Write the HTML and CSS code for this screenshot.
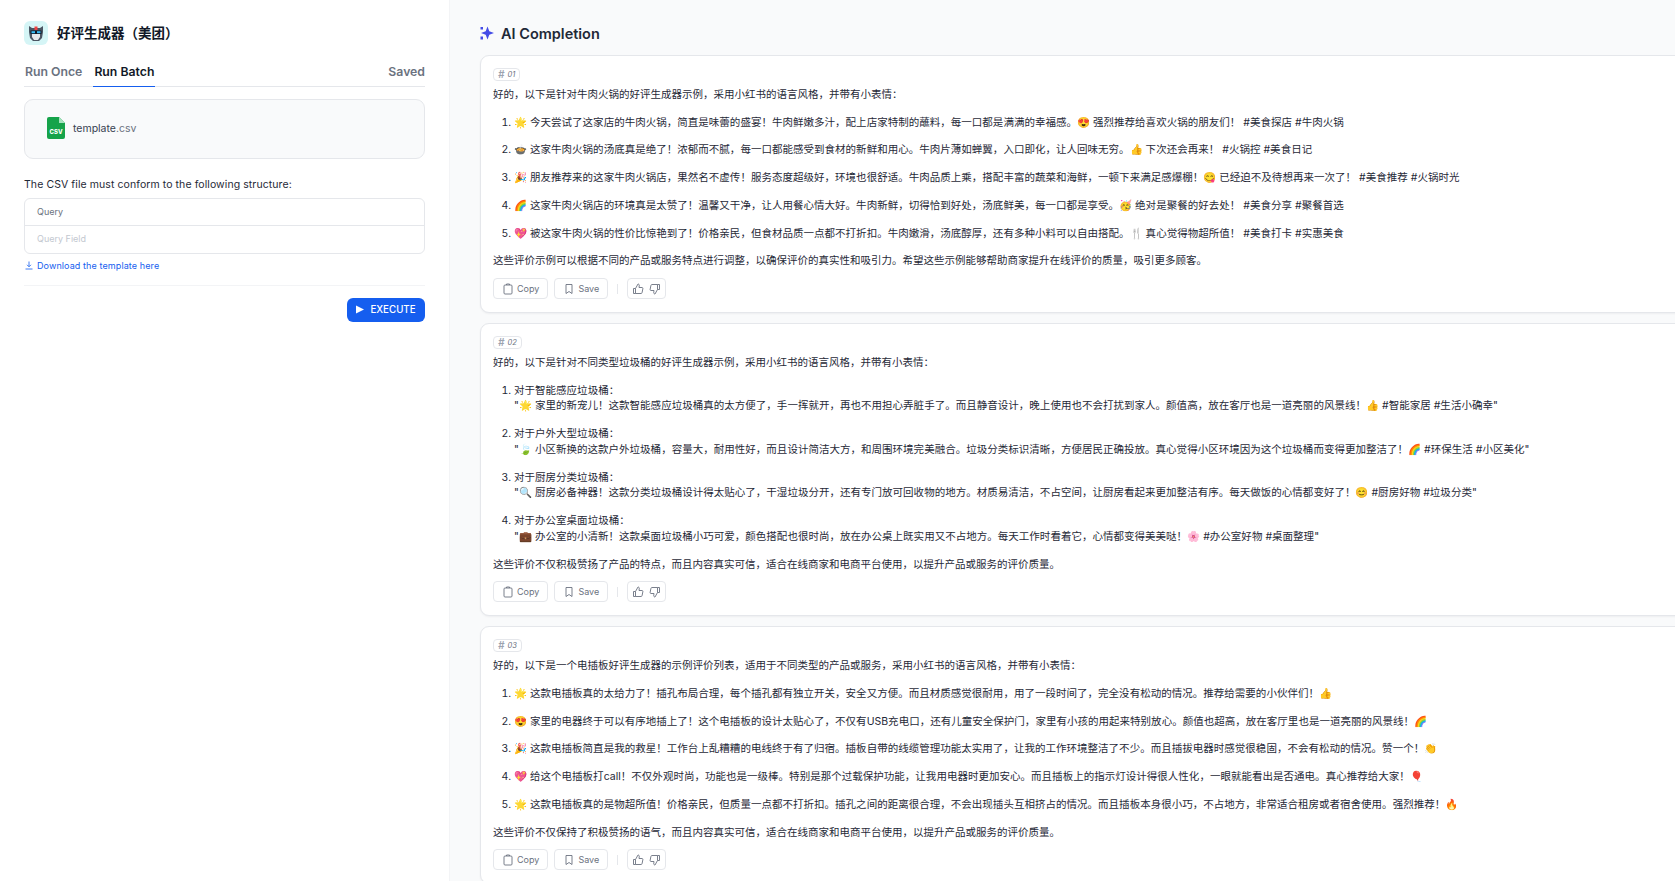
FILE: index.html
```html
<!DOCTYPE html>
<html lang="zh-CN">
<head>
    <meta charset="UTF-8">
    <title>好评生成器（美团）</title>
    <link rel="stylesheet" href="styles.css">
</head>
<body>

<aside class="sidebar">
    <div class="app-head">
        <div class="app-logo">
            <svg width="18" height="18" viewBox="0 0 18 18">
                <path d="M2 2l3 2h8l3-2v6l-1 6-3 3H6l-3-3-1-6z" fill="#4b5563"/>
                <path d="M5 10h8v3l-2 3H7l-2-3z" fill="#e5e7eb"/>
                <rect x="3.500" y="6.500" width="11" height="3.500" fill="#111827"/>
                <rect x="4.500" y="7.200" width="3.500" height="2" fill="#38bdf8"/>
                <rect x="10" y="7.200" width="3.500" height="2" fill="#38bdf8"/>
                <rect x="7.500" y="2.500" width="3" height="3.500" fill="#ef4444"/>
            </svg>
        </div>
        <div class="app-title">好评生成器（美团）</div>
    </div>

    <div class="tabs">
        <div class="tab">Run Once</div>
        <div class="tab tab-active">Run Batch</div>
        <div class="tab tab-saved">Saved</div>
    </div>

    <div class="upload-box">
        <svg class="csv-icon" width="18" height="22" viewBox="0 0 18 22">
            <path d="M2 0h10l6 6v14a2 2 0 0 1-2 2H2a2 2 0 0 1-2-2V2a2 2 0 0 1 2-2z" fill="#16a34a"/>
            <path d="M12 0l6 6h-6z" fill="#a7e3bf"/>
            <text x="9" y="17" text-anchor="middle" class="csv-label">CSV</text>
        </svg>
        <span class="file-name">template<span class="file-ext">.csv</span></span>
    </div>

    <p class="csv-hint">The CSV file must conform to the following structure:</p>

    <div class="csv-table">
        <div class="csv-row">Query</div>
        <div class="csv-row csv-row-light">Query Field</div>
    </div>

    <a class="download-link" href="#">
        <svg width="8" height="9" viewBox="0 0 8 9" fill="none" stroke="#155eef" stroke-width="0.800">
            <path d="M4 0.500v5M2 3.800l2 2 2-2M0.500 8h7"/>
        </svg>
        Download the template here
    </a>

    <div class="sidebar-divider"></div>

    <div class="execute-row">
        <button class="execute-btn">
            <svg width="8" height="9" viewBox="0 0 8 9"><path d="M0 0.500l8 4-8 4z" fill="#fff"/></svg>
            EXECUTE
        </button>
    </div>
</aside>

<main class="main">
    <div class="main-head">
        <svg width="14" height="14" viewBox="0 0 14 14" fill="#444ce7">
            <path d="M7.500 0.500l1.800 4.700L14 7 9.300 8.800 7.500 13.500 5.700 8.800 1 7l4.700-1.800z"/>
            <rect x="0.500" y="1" width="2.500" height="2.500"/>
            <rect x="0.500" y="10.500" width="2.500" height="3"/>
        </svg>
        <h2>AI Completion</h2>
    </div>

    <section class="card">
        <div class="badge"><span class="badge-hash">#</span> 01</div>
        <p>好的，以下是针对牛肉火锅的好评生成器示例，采用小红书的语言风格，并带有小表情：</p>
        <ol>
            <li>🌟 今天尝试了这家店的牛肉火锅，简直是味蕾的盛宴！牛肉鲜嫩多汁，配上店家特制的蘸料，每一口都是满满的幸福感。😍 强烈推荐给喜欢火锅的朋友们！ #美食探店 #牛肉火锅</li>
            <li>🍲 这家牛肉火锅的汤底真是绝了！浓郁而不腻，每一口都能感受到食材的新鲜和用心。牛肉片薄如蝉翼，入口即化，让人回味无穷。👍 下次还会再来！ #火锅控 #美食日记</li>
            <li>🎉 朋友推荐来的这家牛肉火锅店，果然名不虚传！服务态度超级好，环境也很舒适。牛肉品质上乘，搭配丰富的蔬菜和海鲜，一顿下来满足感爆棚！😋 已经迫不及待想再来一次了！ #美食推荐 #火锅时光</li>
            <li>🌈 这家牛肉火锅店的环境真是太赞了！温馨又干净，让人用餐心情大好。牛肉新鲜，切得恰到好处，汤底鲜美，每一口都是享受。🥳 绝对是聚餐的好去处！ #美食分享 #聚餐首选</li>
            <li>💖 被这家牛肉火锅的性价比惊艳到了！价格亲民，但食材品质一点都不打折扣。牛肉嫩滑，汤底醇厚，还有多种小料可以自由搭配。🍴 真心觉得物超所值！ #美食打卡 #实惠美食</li>
        </ol>
        <p>这些评价示例可以根据不同的产品或服务特点进行调整，以确保评价的真实性和吸引力。希望这些示例能够帮助商家提升在线评价的质量，吸引更多顾客。</p>
        <div class="actions">
            <button class="action-btn"><svg class="icon" viewBox="0 0 12 12"><rect x="2" y="2" width="8" height="9" rx="1"/><path d="M4.500 2V1h3v1"/></svg>Copy</button>
            <button class="action-btn"><svg class="icon" viewBox="0 0 12 12"><path d="M3 1.500h6v9L6 8.500l-3 2z"/></svg>Save</button>
            <span class="action-sep"></span>
            <div class="vote-group">
                <svg class="icon vote" viewBox="0 0 12 12"><path d="M1.500 5.500h2v5h-2zM3.500 5.500L6 1c1 0 1.500.8 1.200 2L7 4.500h3c.6 0 1 .5.900 1l-.8 4c-.1.600-.5 1-1 1H3.500"/></svg>
                <svg class="icon vote" viewBox="0 0 12 12"><path d="M10.500 6.500h-2v-5h2zM8.500 6.500L6 11c-1 0-1.500-.8-1.200-2L5 7.500H2c-.6 0-1-.5-.9-1l.8-4c.1-.6.500-1 1-1h5.600"/></svg>
            </div>
        </div>
    </section>

    <section class="card">
        <div class="badge"><span class="badge-hash">#</span> 02</div>
        <p>好的，以下是针对不同类型垃圾桶的好评生成器示例，采用小红书的语言风格，并带有小表情：</p>
        <ol>
            <li>对于智能感应垃圾桶：<br>"🌟 家里的新宠儿！这款智能感应垃圾桶真的太方便了，手一挥就开，再也不用担心弄脏手了。而且静音设计，晚上使用也不会打扰到家人。颜值高，放在客厅也是一道亮丽的风景线！👍 #智能家居 #生活小确幸"</li>
            <li>对于户外大型垃圾桶：<br>"🍃 小区新换的这款户外垃圾桶，容量大，耐用性好，而且设计简洁大方，和周围环境完美融合。垃圾分类标识清晰，方便居民正确投放。真心觉得小区环境因为这个垃圾桶而变得更加整洁了！🌈 #环保生活 #小区美化"</li>
            <li>对于厨房分类垃圾桶：<br>"🔍 厨房必备神器！这款分类垃圾桶设计得太贴心了，干湿垃圾分开，还有专门放可回收物的地方。材质易清洁，不占空间，让厨房看起来更加整洁有序。每天做饭的心情都变好了！😊 #厨房好物 #垃圾分类"</li>
            <li>对于办公室桌面垃圾桶：<br>"💼 办公室的小清新！这款桌面垃圾桶小巧可爱，颜色搭配也很时尚，放在办公桌上既实用又不占地方。每天工作时看着它，心情都变得美美哒！🌸 #办公室好物 #桌面整理"</li>
        </ol>
        <p>这些评价不仅积极赞扬了产品的特点，而且内容真实可信，适合在线商家和电商平台使用，以提升产品或服务的评价质量。</p>
        <div class="actions">
            <button class="action-btn"><svg class="icon" viewBox="0 0 12 12"><rect x="2" y="2" width="8" height="9" rx="1"/><path d="M4.500 2V1h3v1"/></svg>Copy</button>
            <button class="action-btn"><svg class="icon" viewBox="0 0 12 12"><path d="M3 1.500h6v9L6 8.500l-3 2z"/></svg>Save</button>
            <span class="action-sep"></span>
            <div class="vote-group">
                <svg class="icon vote" viewBox="0 0 12 12"><path d="M1.500 5.500h2v5h-2zM3.500 5.500L6 1c1 0 1.500.8 1.200 2L7 4.500h3c.6 0 1 .5.900 1l-.8 4c-.1.600-.5 1-1 1H3.500"/></svg>
                <svg class="icon vote" viewBox="0 0 12 12"><path d="M10.500 6.500h-2v-5h2zM8.500 6.500L6 11c-1 0-1.500-.8-1.200-2L5 7.500H2c-.6 0-1-.5-.9-1l.8-4c.1-.6.500-1 1-1h5.600"/></svg>
            </div>
        </div>
    </section>

    <section class="card">
        <div class="badge"><span class="badge-hash">#</span> 03</div>
        <p>好的，以下是一个电插板好评生成器的示例评价列表，适用于不同类型的产品或服务，采用小红书的语言风格，并带有小表情：</p>
        <ol>
            <li>🌟 这款电插板真的太给力了！插孔布局合理，每个插孔都有独立开关，安全又方便。而且材质感觉很耐用，用了一段时间了，完全没有松动的情况。推荐给需要的小伙伴们！👍</li>
            <li>😍 家里的电器终于可以有序地插上了！这个电插板的设计太贴心了，不仅有USB充电口，还有儿童安全保护门，家里有小孩的用起来特别放心。颜值也超高，放在客厅里也是一道亮丽的风景线！🌈</li>
            <li>🎉 这款电插板简直是我的救星！工作台上乱糟糟的电线终于有了归宿。插板自带的线缆管理功能太实用了，让我的工作环境整洁了不少。而且插拔电器时感觉很稳固，不会有松动的情况。赞一个！👏</li>
            <li>💖 给这个电插板打call！不仅外观时尚，功能也是一级棒。特别是那个过载保护功能，让我用电器时更加安心。而且插板上的指示灯设计得很人性化，一眼就能看出是否通电。真心推荐给大家！🎈</li>
            <li>🌟 这款电插板真的是物超所值！价格亲民，但质量一点都不打折扣。插孔之间的距离很合理，不会出现插头互相挤占的情况。而且插板本身很小巧，不占地方，非常适合租房或者宿舍使用。强烈推荐！🔥</li>
        </ol>
        <p>这些评价不仅保持了积极赞扬的语气，而且内容真实可信，适合在线商家和电商平台使用，以提升产品或服务的评价质量。</p>
        <div class="actions">
            <button class="action-btn"><svg class="icon" viewBox="0 0 12 12"><rect x="2" y="2" width="8" height="9" rx="1"/><path d="M4.500 2V1h3v1"/></svg>Copy</button>
            <button class="action-btn"><svg class="icon" viewBox="0 0 12 12"><path d="M3 1.500h6v9L6 8.500l-3 2z"/></svg>Save</button>
            <span class="action-sep"></span>
            <div class="vote-group">
                <svg class="icon vote" viewBox="0 0 12 12"><path d="M1.500 5.500h2v5h-2zM3.500 5.500L6 1c1 0 1.500.8 1.200 2L7 4.500h3c.6 0 1 .5.900 1l-.8 4c-.1.600-.5 1-1 1H3.500"/></svg>
                <svg class="icon vote" viewBox="0 0 12 12"><path d="M10.500 6.500h-2v-5h2zM8.500 6.500L6 11c-1 0-1.500-.8-1.200-2L5 7.500H2c-.6 0-1-.5-.9-1l.8-4c.1-.6.500-1 1-1h5.600"/></svg>
            </div>
        </div>
    </section>
</main>

</body>
</html>
```

FILE: styles.css
```css
* {
    box-sizing: border-box;
}

html, body {
    height: 100%;
}

body {
    margin: 0;
    display: flex;
    overflow: hidden;
    background-color: #ffffff;
    color: #1f2937;
    font-family: Inter, "Noto Sans CJK SC", sans-serif;
    font-size: 10.5px;
    line-height: 15.75px;
}

.sidebar {
    width: 450px;
    flex-shrink: 0;
    padding: 21px 24px 0;
    border-right: 1px solid #f3f4f6;
    background-color: #ffffff;
}

.app-head {
    display: flex;
    align-items: center;
    gap: 9px;
    height: 24px;
}

.app-logo {
    width: 24px;
    height: 24px;
    display: flex;
    align-items: center;
    justify-content: center;
    border-radius: 6px;
    background-color: #d5f5f6;
}

.app-title {
    padding-top: 2px;
    font-size: 13.5px;
    font-weight: 600;
    color: #111827;
}

.tabs {
    display: flex;
    gap: 10px;
    height: 27px;
    margin-top: 15px;
    border-bottom: 1px solid #e5e7eb;
}

.tab {
    padding: 0 1px;
    height: 27px;
    font-size: 12.25px;
    font-weight: 600;
    line-height: 24px;
    color: #6b7280;
}

.tab-active {
    color: #111827;
    border-bottom: 1px solid #155eef;
}

.tab-saved {
    margin-left: auto;
    padding: 0;
}

.upload-box {
    display: flex;
    align-items: center;
    gap: 8px;
    height: 60px;
    margin-top: 12px;
    padding: 0 22px;
    border: 1px solid #e5e7eb;
    border-radius: 9px;
    background-color: #f9fafb;
}

.csv-icon {
    margin-top: -2px;
}

.csv-label {
    font-family: Inter, sans-serif;
    font-size: 6px;
    font-weight: 800;
    fill: #ffffff;
}

.file-name {
    color: #374151;
}

.file-ext {
    color: #6b7280;
}

.csv-hint {
    margin: 18px 0 5px;
    letter-spacing: 0.08px;
}

.csv-table {
    border: 1px solid #e5e7eb;
    border-radius: 6px;
}

.csv-row {
    height: 27px;
    padding-left: 12px;
    font-size: 9px;
    line-height: 26px;
    color: #6b7280;
    border-bottom: 1px solid #e5e7eb;
}

.csv-row-light {
    height: 27px;
    color: #c3c8d0;
    border-bottom: none;
}

.download-link {
    display: flex;
    align-items: center;
    gap: 4px;
    margin-top: 4px;
    padding-left: 1px;
    font-size: 9px;
    letter-spacing: 0.1px;
    color: #155eef;
    text-decoration: none;
}

.sidebar-divider {
    height: 1px;
    margin-top: 11px;
    background-color: #f3f4f6;
}

.execute-row {
    display: flex;
    justify-content: flex-end;
    margin-top: 12px;
}

.execute-btn {
    display: flex;
    align-items: center;
    justify-content: center;
    gap: 6px;
    width: 78px;
    height: 24px;
    border: none;
    border-radius: 6px;
    background-color: #155eef;
    color: #ffffff;
    font-family: inherit;
    font-size: 9.75px;
    font-weight: 500;
}

.main {
    flex: 1;
    min-width: 0;
    overflow: hidden;
    padding: 21px 0 0 30px;
    background-color: #f9fafb;
}

.main-head {
    display: flex;
    align-items: center;
    gap: 7px;
    height: 24px;
    margin-bottom: 10px;
}

.main-head h2 {
    margin: 0;
    padding-top: 2px;
    font-size: 14.5px;
    font-weight: 600;
    color: #1f2937;
}

.card {
    width: 1300px;
    margin-bottom: 10px;
    padding: 12px 12px 13px;
    border: 1px solid #e5e7eb;
    border-radius: 9px;
    background-color: #ffffff;
    box-shadow: 0 1px 2px rgba(16, 24, 40, 0.05);
}

.badge {
    display: inline-flex;
    align-items: center;
    gap: 3px;
    height: 13px;
    padding: 0 4px;
    border: 1px solid #e5e7eb;
    border-radius: 4px;
    font-size: 7.5px;
    font-style: italic;
    line-height: 11px;
    color: #6b7280;
    vertical-align: top;
}

.badge-hash {
    font-size: 10px;
    font-weight: 600;
    color: #9ca3af;
}

.card p {
    margin: 3px 0 0;
    white-space: nowrap;
}

.card ol {
    margin: 12px 0;
    padding-left: 21px;
    letter-spacing: 0.02px;
}

.card li {
    margin-top: 12px;
    white-space: nowrap;
}

.card li:first-child {
    margin-top: 0;
}

.actions {
    display: flex;
    align-items: center;
    margin-top: 9px;
}

.action-btn {
    display: flex;
    align-items: center;
    gap: 3px;
    height: 21px;
    margin-right: 6px;
    padding: 0 8px;
    border: 1px solid #e5e7eb;
    border-radius: 4px;
    background-color: #ffffff;
    color: #6b7280;
    font-family: inherit;
    font-size: 9px;
}

.action-sep {
    width: 1px;
    height: 10px;
    margin: 0 9px 0 3px;
    background-color: #e5e7eb;
}

.vote-group {
    display: flex;
    align-items: center;
    gap: 5px;
    height: 21px;
    padding: 0 4px;
    border: 1px solid #e5e7eb;
    border-radius: 4px;
}

.icon {
    width: 12px;
    height: 12px;
    fill: none;
    stroke: #6b7280;
    stroke-width: 0.9;
}
```
